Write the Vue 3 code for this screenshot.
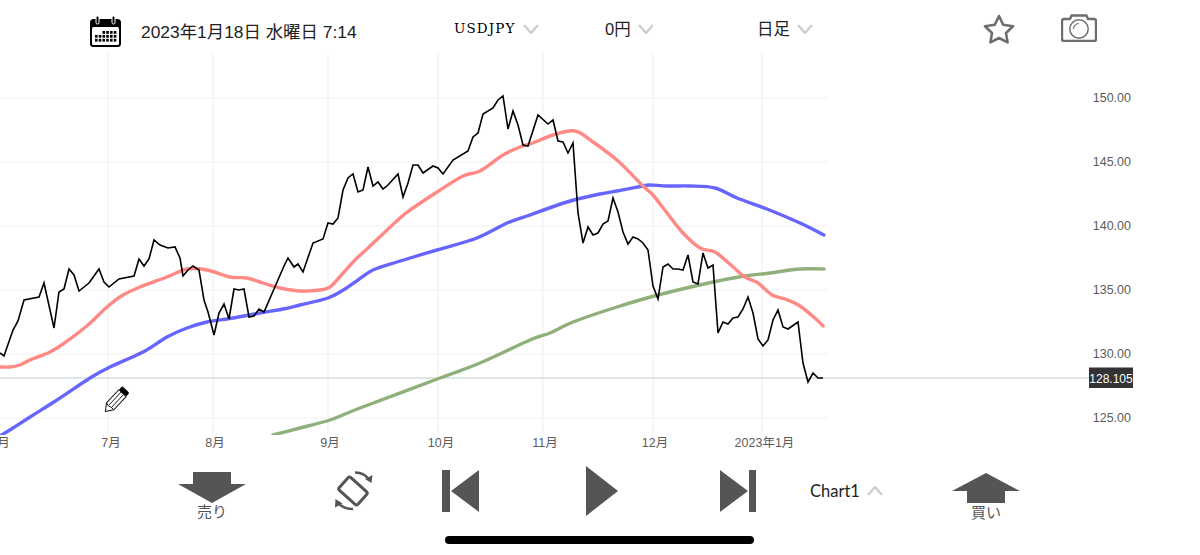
<script setup>
const parse = (s) => s.split(' ').map((p) => p.split(',').map(Number))
// Catmull-Rom smoothing for the moving-average lines
const smooth = (s) => {
  const p = parse(s)
  let d = `M${p[0][0]} ${p[0][1]}`
  for (let i = 0; i < p.length - 1; i++) {
    const a = p[Math.max(i - 1, 0)]
    const b = p[i]
    const c = p[i + 1]
    const e = p[Math.min(i + 2, p.length - 1)]
    const k = 6
    d += ` C${(b[0] + (c[0] - a[0]) / k).toFixed(1)} ${(b[1] + (c[1] - a[1]) / k).toFixed(1)} ${(c[0] - (e[0] - b[0]) / k).toFixed(1)} ${(c[1] - (e[1] - b[1]) / k).toFixed(1)} ${c[0]} ${c[1]}`
  }
  return d
}
const price = '0,353 4,356 13,330 18,321 24,300 39,297 44,283 54,328 59,292 64,289 69,269 74,275 79,291 89,283 99,269 104,282 109,287 119,279 134,276 139,259 144,266 149,259 154,240 160,245 168,248 175,247 180,258 183,276 188,270 193,266 199,270 204,300 208,312 214,335 219,313 224,304 229,319 234,289 239,290 244,289 249,317 254,316 259,309 264,312 284,266 288,258 294,267 298,264 303,272 313,243 323,239 328,223 333,224 338,218 343,190 348,178 353,174 358,192 363,190 368,167 373,186 378,182 383,189 388,185 398,174 403,197 408,183 413,165 418,165 423,173 433,166 438,168 443,174 453,160 468,151 473,137 478,133 483,114 493,108 498,100 503,96 508,129 513,111 518,125 523,145 528,146 538,115 548,124 553,120 558,141 563,142 568,153 573,143 578,213 583,243 588,227 593,235 598,233 603,224 608,221 613,198 618,212 623,232 628,244 633,237 638,239 643,243 648,250 653,286 658,299 663,267 668,264 673,269 678,269 683,270 688,255 693,282 698,284 703,253 708,268 713,265 718,333 723,322 728,324 733,318 738,317 743,309 748,297 753,313 758,339 763,346 768,340 773,320 778,310 783,327 788,329 798,322 803,363 808,382 813,373 818,378 823,378'
const red = smooth('0,367 10,367 20,365 30,360 50,352 63,344 88,325 107,307 123,295 140,287 167,277 187,269 207,270 230,277 247,278 263,283 280,288 300,291 320,290 330,287 337,280 355,260 368,248 400,218 413,208 437,192 463,176 480,171 503,155 520,147 533,143 553,135 575,131 593,142 618,161 643,186 653,195 667,213 683,233 700,248 715,252 732,266 745,277 758,283 772,295 785,299 800,306 817,320 823,326')
const blue = smooth('0,436 13,428 30,417 57,400 90,378 110,367 143,352 167,337 187,328 207,322 233,318 260,313 283,309 300,305 328,298 345,289 358,280 373,270 397,262 437,250 477,238 507,223 527,216 567,202 600,194 617,191 643,186 650,185 667,186 690,186 715,188 737,198 767,209 800,223 824,235')
const green = smooth('273,435 300,428 330,420 360,408 440,378 480,363 530,340 550,333 573,322 617,307 658,295 713,282 745,276 770,273 800,269 824,269')
const hLines = [98, 162, 226, 290, 354, 418]
const vLines = [108, 213, 328, 438, 543, 653, 762]
const yLabels = [
  { t: '150.00', y: 98 }, { t: '145.00', y: 162 }, { t: '140.00', y: 226 },
  { t: '135.00', y: 290 }, { t: '130.00', y: 354 }, { t: '125.00', y: 418 }
]
const xLabels = [
  { t: '6月', x: 0 }, { t: '7月', x: 111 }, { t: '8月', x: 215 }, { t: '9月', x: 330 },
  { t: '10月', x: 441 }, { t: '11月', x: 545 }, { t: '12月', x: 655 }, { t: '2023年1月', x: 764.5 }
]
const calendarDots = []
for (let row = 0; row < 3; row++) {
  for (let col = 0; col < 6; col++) {
    if (row === 0 && col < 2) continue
    calendarDots.push({ x: 5 + col * 3.75, y: 15 + row * 3.9 })
  }
}
</script>

<template>
  <div class="page">
    <header class="top">
      <svg class="calendar" viewBox="0 0 31 31" width="31" height="31">
        <rect x="0" y="3" width="31" height="28" rx="3.5" fill="#000" />
        <rect x="2" y="11" width="27" height="18" rx="1.5" fill="#fff" />
        <rect x="6" y="0" width="3" height="8" rx="1.5" fill="#000" stroke="#fff" stroke-width="1" />
        <rect x="22" y="0" width="3" height="8" rx="1.5" fill="#000" stroke="#fff" stroke-width="1" />
        <rect v-for="(d, i) in calendarDots" :key="i" :x="d.x" :y="d.y" width="2.6" height="2.8" fill="#000" />
      </svg>
      <span class="date">2023年1月18日 水曜日 7:14</span>
      <span class="pair">USDJPY</span>
      <svg class="chev" viewBox="0 0 16 10" width="16" height="10"><path d="M1 1 L8 9 L15 1" /></svg>
      <span class="amount">0円</span>
      <svg class="chev" viewBox="0 0 16 10" width="16" height="10"><path d="M1 1 L8 9 L15 1" /></svg>
      <span class="span-label">日足</span>
      <svg class="chev" viewBox="0 0 16 10" width="16" height="10"><path d="M1 1 L8 9 L15 1" /></svg>
      <svg class="star" viewBox="0 0 32 30" width="32" height="30">
        <path d="M16 2 L20.2 10.8 L30 12.2 L23 19 L24.6 28.4 L16 24 L7.4 28.4 L9 19 L2 12.2 L11.8 10.8 Z" fill="none" stroke="#6e6e6e" stroke-width="2.6" stroke-linejoin="round" />
      </svg>
      <svg class="camera" viewBox="0 0 36 28" width="36" height="28">
        <path d="M3 5 H9 L10.5 1.5 H25.5 L27 5 H33 Q35 5 35 7 V25 Q35 27 33 27 H3 Q1 27 1 25 V7 Q1 5 3 5 Z" fill="none" stroke="#6e6e6e" stroke-width="2.4" stroke-linejoin="round" />
        <circle cx="18" cy="15" r="9.2" fill="none" stroke="#6e6e6e" stroke-width="1.5" />
        <path d="M12.5 15 A5.5 5.5 0 0 1 18 9.5" fill="none" stroke="#6e6e6e" stroke-width="1.2" />
      </svg>
    </header>

    <svg class="chart" viewBox="0 53 1200 402" width="1200" height="402">
      <defs>
        <clipPath id="plot"><rect x="0" y="53" width="828" height="382" /></clipPath>
      </defs>
      <g stroke="#f1f1f3" stroke-width="1.2">
        <line v-for="y in hLines" :key="y" x1="0" :y1="y" x2="828" :y2="y" />
        <line v-for="x in vLines" :key="x" :x1="x" y1="53" :x2="x" y2="434" />
      </g>
      <line x1="0" y1="378" x2="1090" y2="378" stroke="#bfcdd2" stroke-width="1.2" />
      <g clip-path="url(#plot)" fill="none" stroke-linejoin="round" stroke-linecap="round">
        <path :d="green" stroke="#8fb07a" stroke-width="3.4" />
        <path :d="blue" stroke="#6666ff" stroke-width="3.4" />
        <path :d="red" stroke="#ff8a85" stroke-width="3.4" />
        <polyline :points="price" stroke="#000" stroke-width="1.6" stroke-linecap="butt" stroke-linejoin="miter" />
      </g>
      <g transform="translate(117 399) rotate(43)">
        <rect x="-5" y="-13" width="10" height="5" rx="1.5" fill="#000" />
        <path d="M-5 -8 H5 V10 L0 17 L-5 10 Z" fill="#fff" stroke="#111" stroke-width="1" stroke-linejoin="round" />
        <path d="M-1.7 -8 V10 M1.7 -8 V10 M-5 10 L-1.7 11 L1.7 10 L5 10" fill="none" stroke="#111" stroke-width="0.9" />
      </g>
      <text v-for="l in yLabels" :key="l.t" class="axis" x="1131" :y="l.y + 4" text-anchor="end">{{ l.t }}</text>
      <text v-for="l in xLabels" :key="l.t" class="axis" :x="l.x" y="447" text-anchor="middle">{{ l.t }}</text>
      <rect x="1089" y="367.5" width="44" height="20.5" fill="#333" />
      <text class="axis current" x="1111" y="382.5" text-anchor="middle">128.105</text>
    </svg>

    <footer class="bottom">
      <div class="trade sell">
        <svg viewBox="0 0 68 31" width="68" height="31"><path d="M15 0 H53 V12 H68 L34 31 L0 12 H15 Z" fill="#555" /></svg>
        <span>売り</span>
      </div>
      <svg class="rotate" viewBox="0 0 42 42" width="42" height="42">
        <rect x="-12.5" y="-8.5" width="25" height="17" rx="2" transform="translate(20 21) rotate(-138)" fill="none" stroke="#555" stroke-width="3" />
        <path d="M22 2.5 Q32 2.5 37 11" fill="none" stroke="#555" stroke-width="2.4" />
        <path d="M32 9 L38.5 13 L39.5 5 Z" fill="#555" />
        <path d="M20 39 Q10 39 4 32" fill="none" stroke="#555" stroke-width="2.4" />
        <path d="M9.5 33.5 L2.5 29 L2 37.5 Z" fill="#555" />
      </svg>
      <svg class="prev" viewBox="0 0 37 42" width="37" height="42"><path d="M0 0 H8 V42 H0 Z M37 0 V42 L9 21 Z" fill="#555" /></svg>
      <svg class="play" viewBox="0 0 32 50" width="32" height="50"><path d="M0 0 L32 25 L0 50 Z" fill="#555" /></svg>
      <svg class="next" viewBox="0 0 36 42" width="36" height="42"><path d="M0 0 L28 21 L0 42 Z M29 0 H36 V42 H29 Z" fill="#555" /></svg>
      <span class="chart-name">Chart1</span>
      <svg class="chev up" viewBox="0 0 16 10" width="16" height="10"><path d="M1 9 L8 1 L15 9" /></svg>
      <div class="trade buy">
        <svg viewBox="0 0 68 31" width="68" height="31"><path d="M34 0 L68 18 H53 V30 H15 V18 H0 Z" fill="#555" /></svg>
        <span>買い</span>
      </div>
    </footer>
    <div class="home-bar"></div>
  </div>
</template>

<style scoped>
.page {
  width: 1200px;
  height: 555px;
  overflow: hidden;
  background: #fff;
  font-family: "Liberation Sans", "Noto Sans CJK JP", sans-serif;
}
.top {
  height: 53px;
  display: flex;
  align-items: center;
  padding-left: 90px;
  box-sizing: border-box;
  color: #222;
}
.calendar { flex: none; margin-top: 10px; }
.date { margin-left: 20px; font-size: 17.4px; width: 215px; margin-top: 7px; white-space: nowrap; }
.pair { margin-left: 98px; font-family: "DejaVu Serif", serif; font-size: 13.5px; letter-spacing: 1.1px; color: #000; width: 62px; margin-top: 3px; white-space: nowrap; }
.amount { margin-left: 66px; font-size: 16.5px; width: 26px; margin-top: 3px; white-space: nowrap; }
.span-label { margin-left: 103px; font-size: 16.5px; width: 33px; margin-top: 3px; white-space: nowrap; }
.chev { flex: none; margin-left: 7px; margin-top: 5px; }
.chev path { fill: none; stroke: #cdcdcd; stroke-width: 2.2; }
.star { flex: none; margin-left: 170px; margin-top: 5px; }
.camera { flex: none; margin-left: 46px; margin-top: 3px; }
.chart { display: block; }
.axis { font-size: 12.5px; fill: #5c5c5c; }
.current { fill: #fff; font-size: 12px; }
.bottom {
  height: 81px;
  display: flex;
  align-items: flex-start;
  padding-left: 178px;
  box-sizing: border-box;
}
.trade { display: flex; flex-direction: column; align-items: center; width: 68px; flex: none; color: #555; font-size: 15px; line-height: 18px; }
.trade span { display: block; }
.sell { margin-top: 17px; }
.rotate { flex: none; margin-left: 87px; margin-top: 15px; }
.prev { flex: none; margin-left: 67px; margin-top: 15px; }
.play { flex: none; margin-left: 107px; margin-top: 11px; }
.next { flex: none; margin-left: 102px; margin-top: 15px; }
.chart-name { margin-left: 54px; margin-top: 26px; font-family: Lato, sans-serif; font-size: 16.5px; color: #222; width: 50px; white-space: nowrap; }
.chev.up { margin-left: 7px; margin-top: 31px; }
.buy { margin-left: 69px; margin-top: 18px; }
.home-bar { width: 309px; height: 8px; margin-left: 445px; background: #000; border-radius: 4px; }
</style>
